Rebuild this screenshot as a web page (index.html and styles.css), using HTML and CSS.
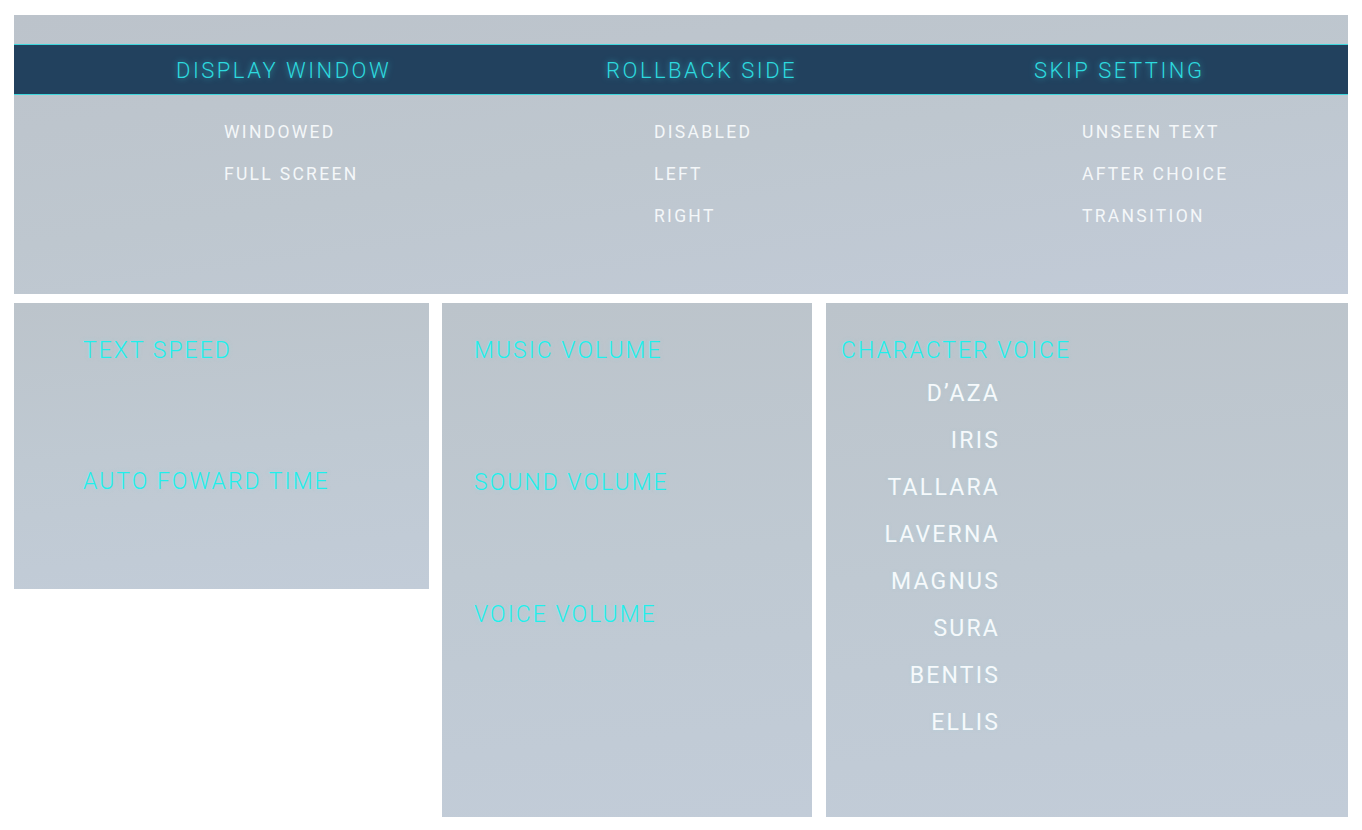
FILE: index.html
```html
<!DOCTYPE html>
<html>
<head>
<meta charset="utf-8">
<link rel="stylesheet" href="styles.css">
</head>
<body>
<div class="page">
  <section class="top-panel">
    <div class="header-bar">
      <div class="col"><h2 class="title">DISPLAY WINDOW</h2></div>
      <div class="col"><h2 class="title">ROLLBACK SIDE</h2></div>
      <div class="col"><h2 class="title">SKIP SETTING</h2></div>
    </div>
    <div class="options">
      <ul class="col list">
        <li>WINDOWED</li>
        <li>FULL SCREEN</li>
      </ul>
      <ul class="col list">
        <li>DISABLED</li>
        <li>LEFT</li>
        <li>RIGHT</li>
      </ul>
      <ul class="col list">
        <li>UNSEEN TEXT</li>
        <li>AFTER CHOICE</li>
        <li>TRANSITION</li>
      </ul>
    </div>
  </section>
  <div class="bottom">
    <section class="panel panel-speed">
      <div class="label">TEXT SPEED</div>
      <div class="label">AUTO FOWARD TIME</div>
    </section>
    <section class="panel panel-volume">
      <div class="label">MUSIC VOLUME</div>
      <div class="label">SOUND VOLUME</div>
      <div class="label">VOICE VOLUME</div>
    </section>
    <section class="panel panel-voice">
      <div class="label">CHARACTER VOICE</div>
      <ul class="names">
        <li>D’AZA</li>
        <li>IRIS</li>
        <li>TALLARA</li>
        <li>LAVERNA</li>
        <li>MAGNUS</li>
        <li>SURA</li>
        <li>BENTIS</li>
        <li>ELLIS</li>
      </ul>
    </section>
  </div>
</div>
</body>
</html>
```

FILE: styles.css
```css
* { box-sizing: border-box; }
html, body { margin: 0; padding: 0; background: #ffffff; }
body {
  font-family: Roboto, "Liberation Sans", sans-serif;
  width: 1362px;
  height: 830px;
  overflow: hidden;
}
.page {
  padding: 15px 14px 0 14px;
  display: flex;
  flex-direction: column;
  gap: 9px;
}
.top-panel {
  height: 279px;
  padding-top: 29px;
  background: linear-gradient(172deg, #bcc3cb 0%, #bec7cf 50%, #c2cbd8 100%);
}
.header-bar {
  height: 51px;
  background: #22415e;
  border-top: 1px solid #3fd6dc;
  border-bottom: 1px solid #3fd6dc;
  display: grid;
  grid-template-columns: 430px 428px 1fr;
  padding-left: 162px;
  padding-top: 2px;
  align-items: center;
}
.title {
  margin: 0;
  font-weight: 300;
  font-size: 22px;
  letter-spacing: 2.5px;
  color: #2ddadf;
  text-shadow: 0 0 6px rgba(50, 225, 235, 0.6);
  line-height: 26px;
}
.options {
  display: grid;
  grid-template-columns: 430px 428px 1fr;
  padding-left: 210px;
  padding-top: 27px;
}
.list {
  list-style: none;
  margin: 0;
  padding: 0;
  display: flex;
  flex-direction: column;
}
.list li {
  font-size: 17.5px;
  line-height: 20px;
  letter-spacing: 2.3px;
  color: #f4f7f9;
  height: 42px;
}
.bottom {
  display: flex;
  gap: 13px;
  align-items: flex-start;
}
.panel {
  background: linear-gradient(175deg, #bcc4cb 0%, #bfc9d2 50%, #c2ccd8 100%);
  padding-top: 33px;
}
.panel-speed {
  width: 415px;
  height: 286px;
  padding-left: 69px;
}
.panel-volume {
  width: 370px;
  height: 514px;
  padding-left: 32px;
}
.panel-voice {
  width: 522px;
  height: 514px;
  margin-left: 1px;
  padding-left: 15px;
}
.label {
  font-size: 23px;
  font-weight: 300;
  letter-spacing: 2.0px;
  color: #1ef0ec;
  line-height: 30px;
  height: 131px;
  text-shadow: 0 0 4px rgba(120, 230, 240, 0.35);
}
.panel-volume .label { height: 132px; }
.panel-voice .label { height: 43px; }
.names {
  list-style: none;
  margin: 0;
  padding: 0;
  width: 159px;
  text-align: right;
}
.names li {
  font-size: 23px;
  line-height: 30px;
  height: 47px;
  letter-spacing: 2.2px;
  color: #f6f9fb;
  text-shadow: 0 0 3px rgba(170, 215, 225, 0.5);
}
```
